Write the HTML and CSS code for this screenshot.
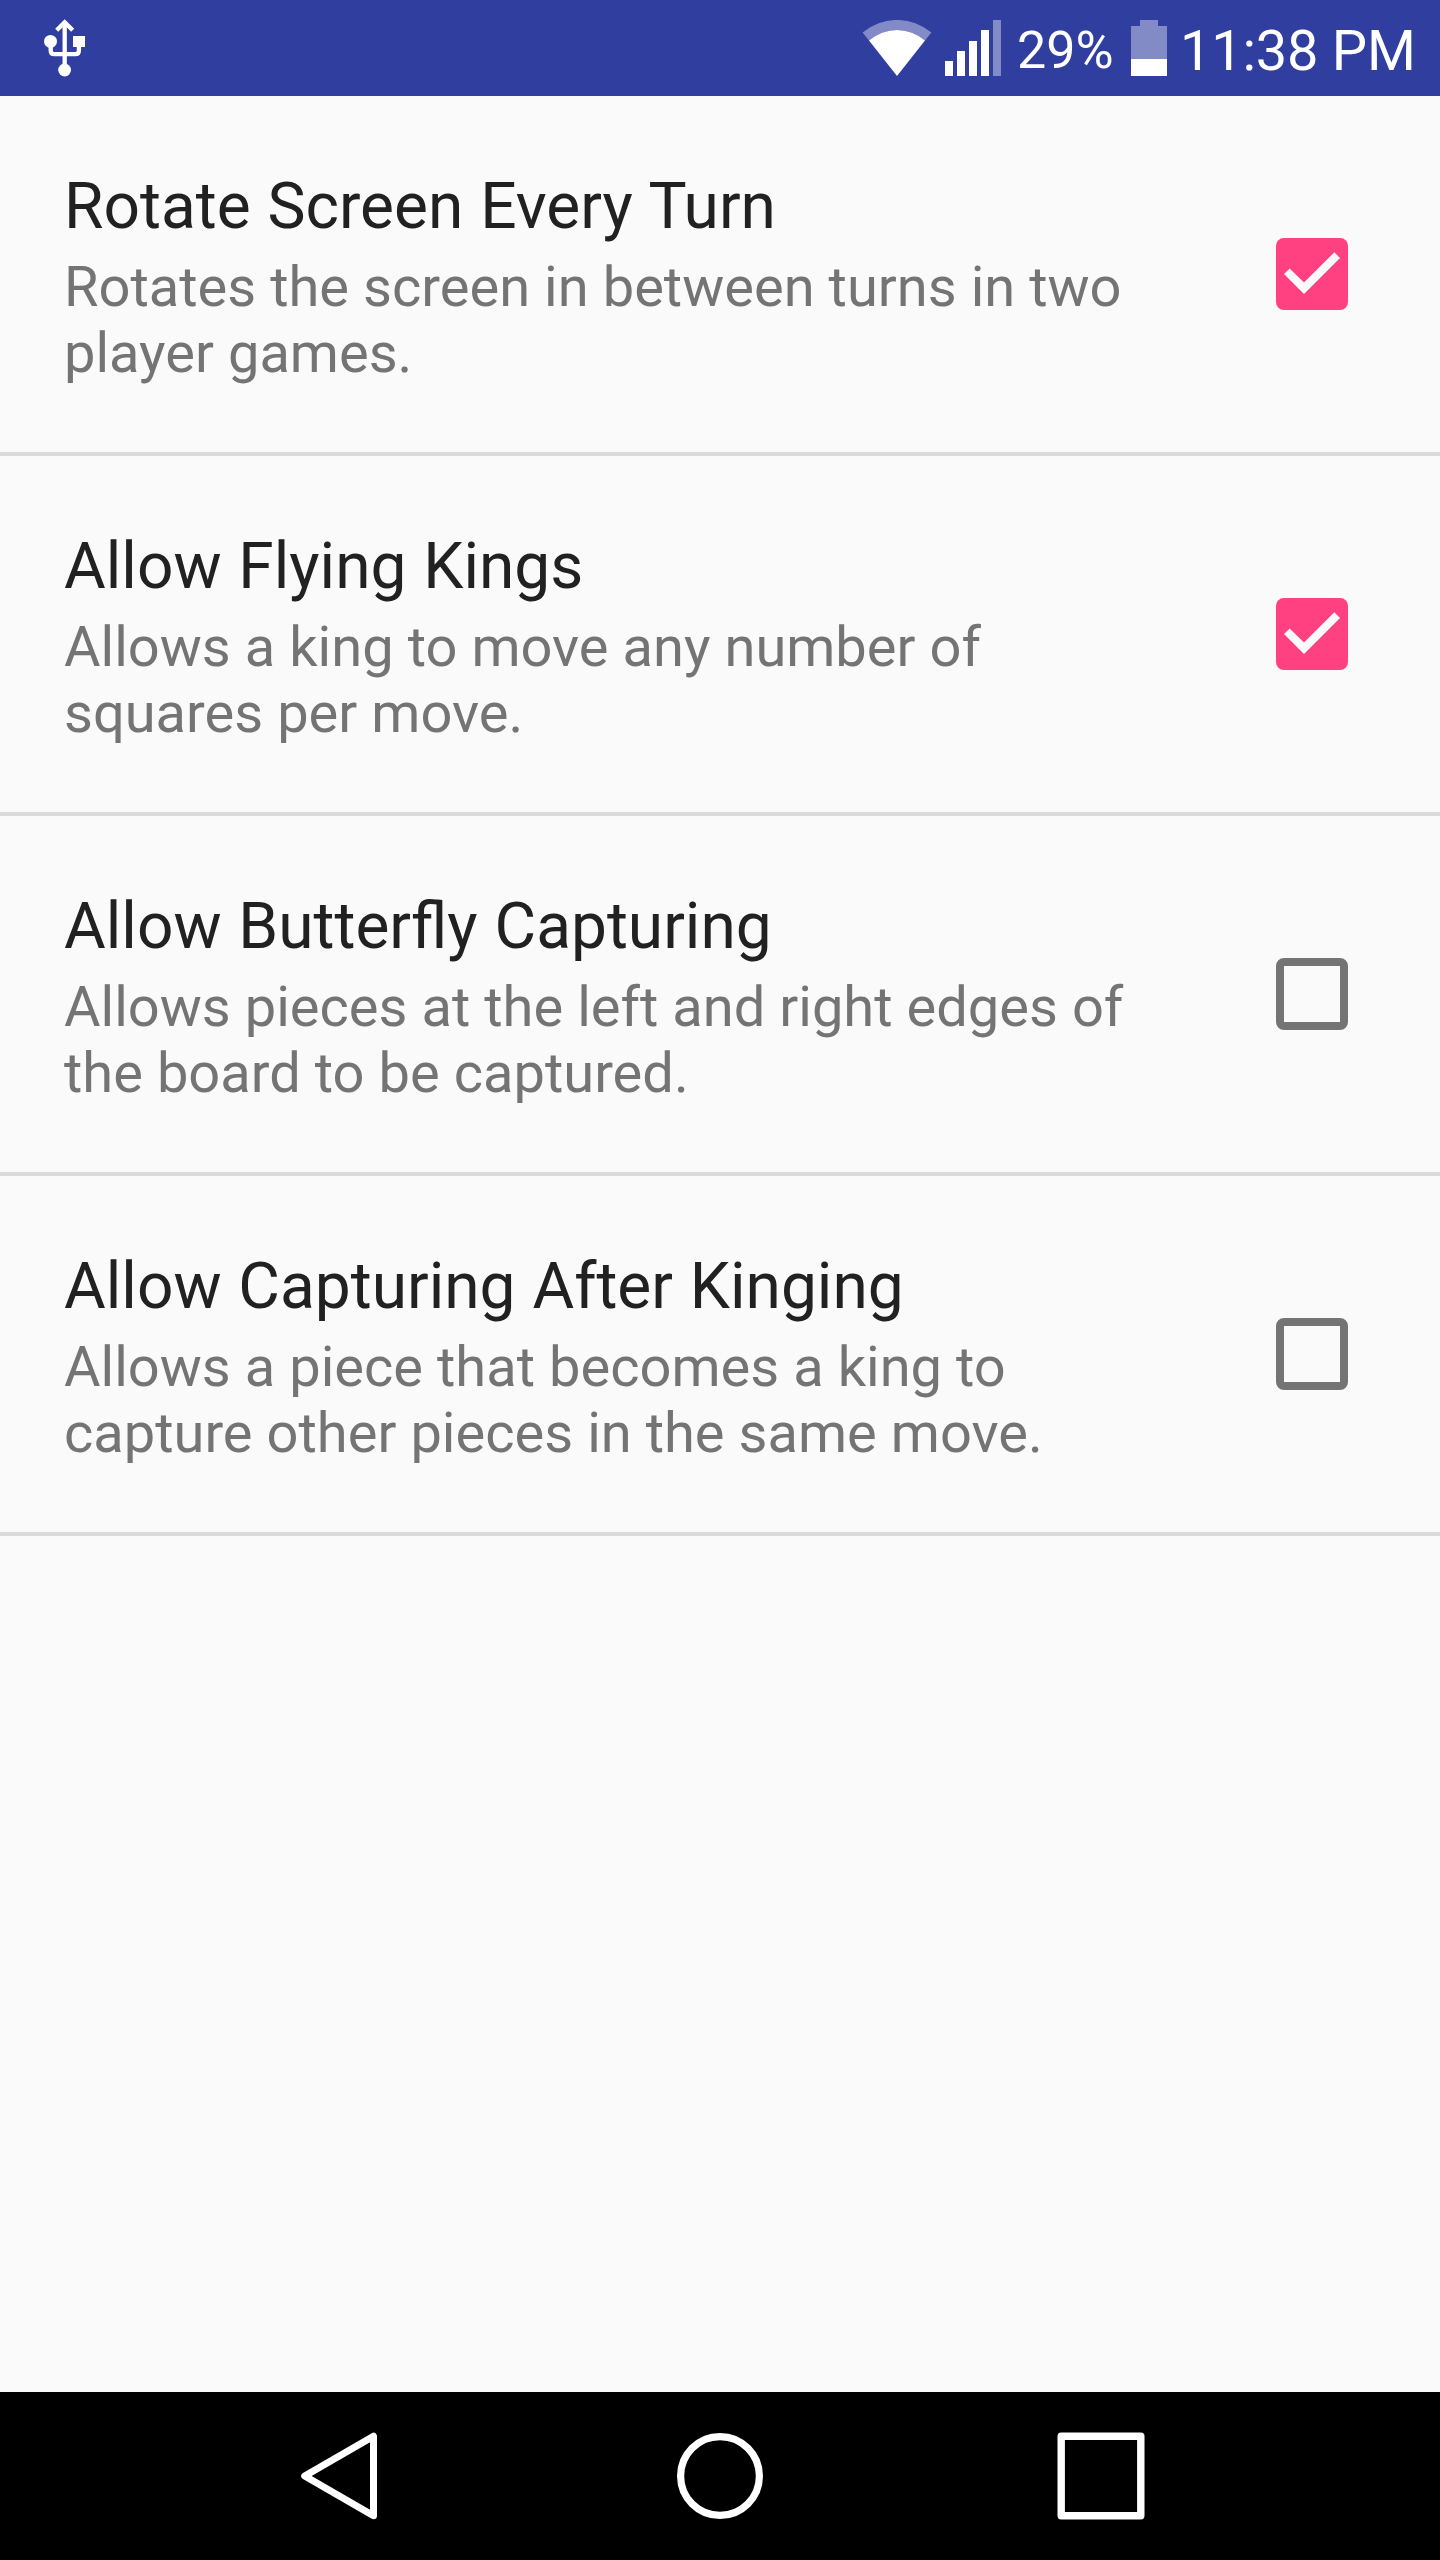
FILE: index.html
```html
<!DOCTYPE html>
<html lang="en">
<head>
<meta charset="utf-8">
<title>Settings</title>
<link rel="stylesheet" href="styles.css">
</head>
<body>
<div class="screen">
  <header class="status-bar">
    <svg class="usb" width="44" height="96" viewBox="42 0 44 96">
      <g fill="none" stroke="#fff" stroke-width="4.3">
        <path d="M64.7 70V23M50.7 44V50.5Q50.7 54.2 54.4 54.2H75.2Q78.9 54.2 78.9 50.5V44"/>
        <path d="M56.7 30.2L64.7 22.2L72.7 30.2"/>
      </g>
      <g fill="#fff">
        <circle cx="64.6" cy="70" r="6.4"/>
        <circle cx="50.5" cy="41.4" r="6.5"/>
        <path d="M73 36h12v11H73z"/>
      </g>
    </svg>
    <div class="indicators">
      <svg class="wifi" width="70" height="56" viewBox="862 20 70 56">
        <path fill="#fff" fill-opacity=".4" d="M862.6 32.5A53.4 53.4 0 0 1 931.4 32.5L925 40.5A42.6 42.6 0 0 0 869 40.5Z"/>
        <path fill="#fff" d="M869 40.5A42.6 42.6 0 0 1 925 40.5L897 76Z"/>
      </svg>
      <svg class="signal" width="56" height="56" viewBox="0 0 56 56">
        <path fill="#fff" d="M0 41h8v15H0zM12 31h8v25h-8zM24 21h8v35h-8zM36 10h8v46h-8z"/>
        <path fill="#fff" fill-opacity=".4" d="M48 0h8v56h-8z"/>
      </svg>
      <span class="percent">29%</span>
      <svg class="battery" width="36" height="56" viewBox="0 0 36 56">
        <path fill="#fff" fill-opacity=".4" d="M9 0h18v6h9v33H0V6h9z"/>
        <path fill="#fff" d="M0 39h36v17H0z"/>
      </svg>
      <span class="clock">11:38 PM</span>
    </div>
  </header>

  <main class="list">
    <section class="row">
      <div class="text">
        <h2 class="title">Rotate Screen Every Turn</h2>
        <p class="summary">Rotates the screen in between turns in two<br>player games.</p>
      </div>
      <svg class="checkbox" width="72" height="72" viewBox="0 0 72 72">
        <rect width="72" height="72" rx="8" fill="#ff4081"/>
        <path fill="#fafafa" d="M28 56L8 36L13.7 30.4L28 44.6L58.3 14.3L64 20Z"/>
      </svg>
    </section>
    <section class="row">
      <div class="text">
        <h2 class="title">Allow Flying Kings</h2>
        <p class="summary">Allows a king to move any number of<br>squares per move.</p>
      </div>
      <svg class="checkbox" width="72" height="72" viewBox="0 0 72 72">
        <rect width="72" height="72" rx="8" fill="#ff4081"/>
        <path fill="#fafafa" d="M28 56L8 36L13.7 30.4L28 44.6L58.3 14.3L64 20Z"/>
      </svg>
    </section>
    <section class="row">
      <div class="text">
        <h2 class="title">Allow Butterfly Capturing</h2>
        <p class="summary">Allows pieces at the left and right edges of<br>the board to be captured.</p>
      </div>
      <span class="checkbox unchecked"></span>
    </section>
    <section class="row">
      <div class="text">
        <h2 class="title">Allow Capturing After Kinging</h2>
        <p class="summary">Allows a piece that becomes a king to<br>capture other pieces in the same move.</p>
      </div>
      <span class="checkbox unchecked"></span>
    </section>
  </main>

  <nav class="nav-bar">
    <svg width="88" height="88" viewBox="0 0 88 88">
      <path fill="none" stroke="#fff" stroke-width="7" stroke-linejoin="round" d="M78.5 4.2V83.8L9.7 44Z"/>
    </svg>
    <svg width="88" height="88" viewBox="0 0 88 88">
      <circle cx="44" cy="44" r="39.4" fill="none" stroke="#fff" stroke-width="7.2"/>
    </svg>
    <svg width="88" height="88" viewBox="0 0 88 88">
      <rect x="4.2" y="4.2" width="79.6" height="79.6" fill="none" stroke="#fff" stroke-width="7.4" stroke-linejoin="round"/>
    </svg>
  </nav>
</div>
</body>
</html>
```

FILE: styles.css
```css
body {
  margin: 0;
  font-family: Roboto, sans-serif;
}

.screen {
  display: flex;
  flex-direction: column;
  width: 1440px;
  height: 2560px;
  background: #fafafa;
  overflow: hidden;
}

.status-bar {
  display: flex;
  justify-content: space-between;
  align-items: center;
  height: 96px;
  padding: 0 24px 0 42px;
  background: #303f9f;
  color: #fff;
}

.indicators {
  display: flex;
  align-items: center;
  height: 96px;
}

.signal {
  margin-left: 13px;
}

.percent {
  width: 130px;
  box-sizing: border-box;
  padding: 5px 0 0 16px;
  font-size: 52px;
  line-height: 98px;
  white-space: nowrap;
}

.clock {
  width: 249px;
  box-sizing: border-box;
  padding: 6px 0 0 13px;
  font-size: 56px;
  letter-spacing: -0.25px;
  line-height: 100px;
  white-space: nowrap;
}

.list {
  flex: 1;
}

.row {
  display: flex;
  justify-content: space-between;
  align-items: center;
  box-sizing: border-box;
  height: 360px;
  padding: 0 92px 0 64px;
  border-bottom: 4px solid #dadada;
}

.text {
  height: 210px;
}

.title {
  margin: 0 0 10px;
  font-size: 64px;
  font-weight: 400;
  word-spacing: 1px;
  line-height: 75px;
  color: #212121;
}

.summary {
  margin: 0;
  font-size: 56px;
  word-spacing: 0.15px;
  line-height: 66px;
  color: #747474;
  white-space: nowrap;
}

.checkbox {
  flex: none;
}

.unchecked {
  box-sizing: border-box;
  width: 72px;
  height: 72px;
  border: 8px solid #747474;
  border-radius: 8px;
}

.nav-bar {
  display: flex;
  justify-content: center;
  align-items: center;
  gap: 293px;
  height: 168px;
  background: #000;
}
```
